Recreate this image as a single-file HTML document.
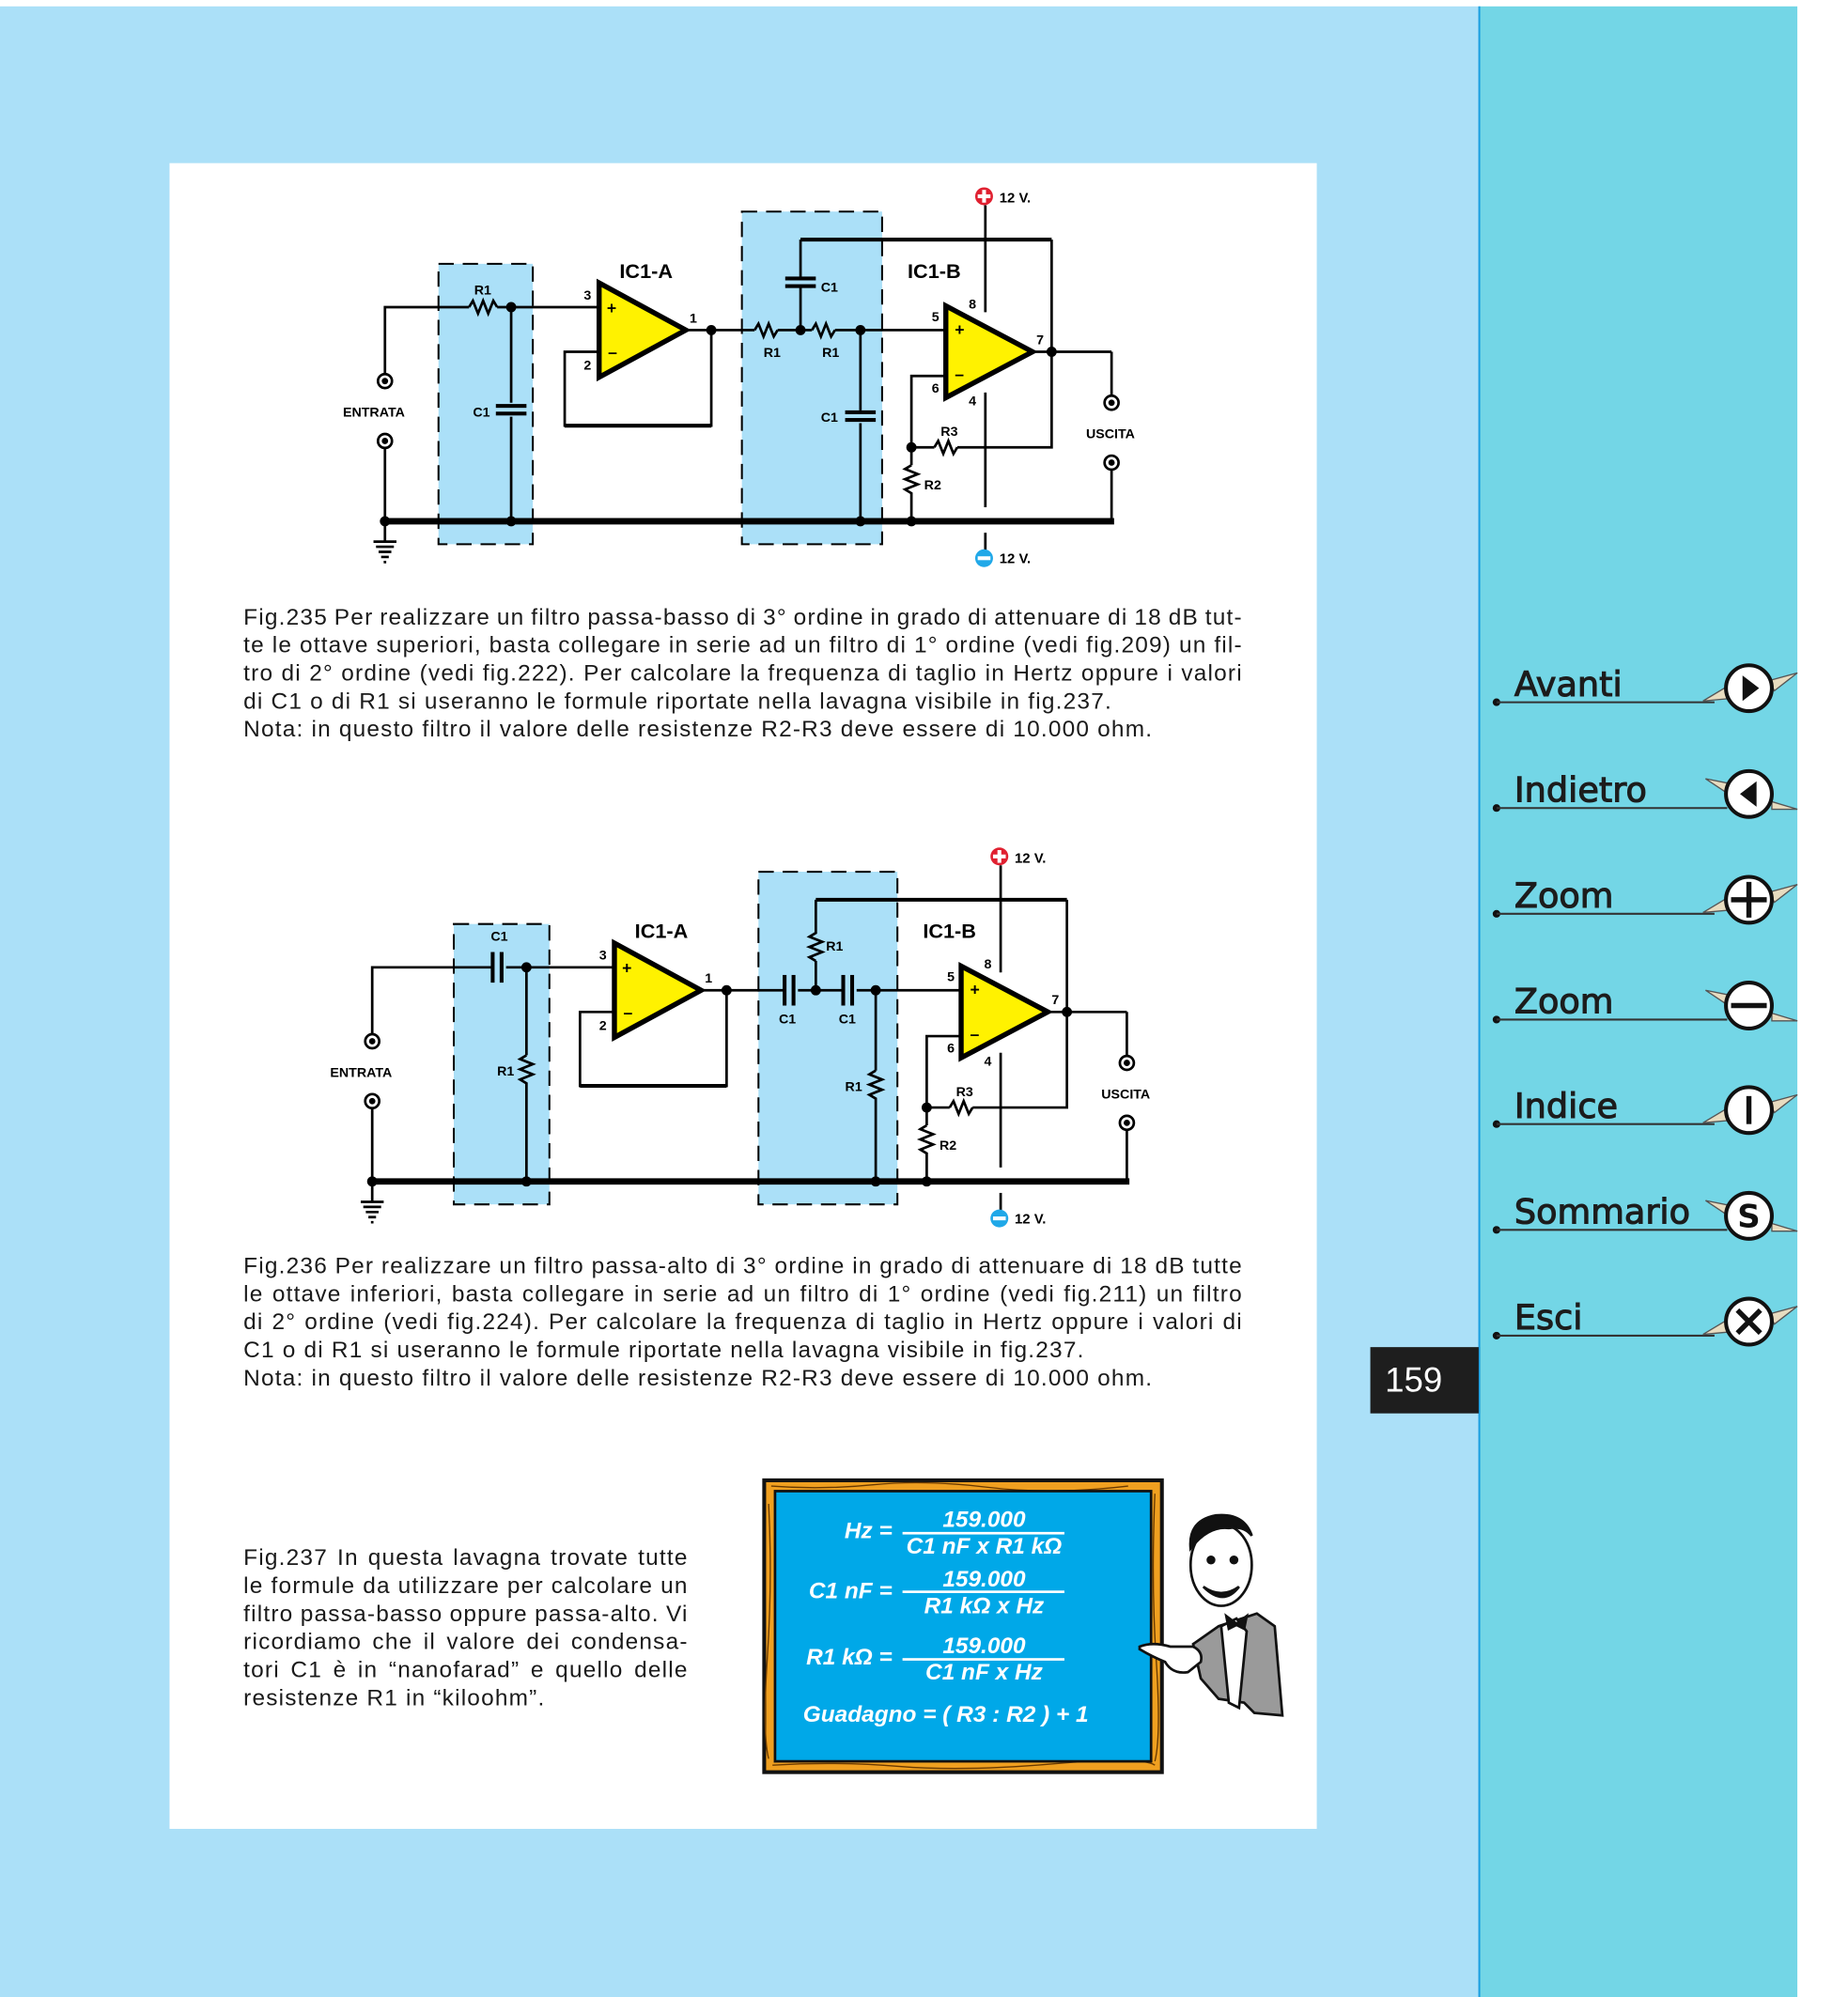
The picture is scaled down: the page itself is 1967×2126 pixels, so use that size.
<!DOCTYPE html>
<html><head><meta charset="utf-8"><style>
html,body{margin:0;padding:0;background:#fff;}
#wrap{position:absolute;left:0;top:0;width:1450px;height:1567px;transform:scale(1.3568);transform-origin:0 0;overflow:hidden;}
.t{position:absolute;font-family:"Liberation Sans",sans-serif;font-size:18px;letter-spacing:0.88px;color:#1a1a1a;line-height:22px;}
.t div{white-space:nowrap;}
.j{text-align:justify;text-align-last:justify;word-spacing:-4px;}
.nav{position:absolute;left:1188px;font-family:"DejaVu Sans",sans-serif;font-size:27px;color:#1c1c1c;-webkit-text-stroke:0.8px #1c1c1c;}
</style></head><body><div id="wrap">
<svg width="1450" height="1567" viewBox="0 0 1450 1567" style="position:absolute;left:0;top:0">
<rect x="0" y="5" width="1160" height="1562" fill="#abe0f8"/>
<rect x="1160" y="5" width="250" height="1562" fill="#73d6e6"/>
<line x1="1160.5" y1="5" x2="1160.5" y2="1567" stroke="#1a9ee0" stroke-width="1.5"/>
<rect x="133" y="128" width="900" height="1307" fill="#fff"/>
<rect x="1075" y="1057" width="85" height="52" fill="#1e1e1e"/>
<text x="1109" y="1092" fill="#fff" font-family="Liberation Sans" font-size="27" text-anchor="middle">159</text>

<defs>
<g id="jack"><circle r="5.5" fill="#fff" stroke="#000" stroke-width="2"/><circle r="2.5" fill="#000"/></g>
<g id="node"><circle r="4" fill="#000"/></g>
</defs>

<!-- CIRCUIT 1 -->
<g font-family="Liberation Sans" font-weight="bold" fill="#000">
<rect x="344" y="207" width="74" height="220" fill="#abe0f8" stroke="#000" stroke-width="1.5" stroke-dasharray="12,7"/>
<rect x="582" y="166" width="110" height="261" fill="#abe0f8" stroke="#000" stroke-width="1.5" stroke-dasharray="12,7"/>
<g stroke="#000" stroke-width="2" fill="none">
<polyline points="302,293 302,241 368,241"/>
<path d="M368,241 l3,-5 l4,10 l4,-10 l4,10 l4,-10 l3,5"/>
<line x1="390" y1="241" x2="470" y2="241"/>
<line x1="401" y1="241" x2="401" y2="316"/><line x1="401" y1="327" x2="401" y2="409"/>
<line x1="302" y1="351" x2="302" y2="409"/>
<polyline points="538,259 592,259"/>
<path d="M592,259 l3,-5 l4,10 l4,-10 l4,10 l3,-5"/>
<line x1="610" y1="259" x2="637" y2="259"/>
<path d="M637,259 l3,-5 l4,10 l4,-10 l4,10 l3,-5"/>
<line x1="655" y1="259" x2="742" y2="259"/>
<polyline points="558,259 558,334 443,334 443,276 470,276"/>
<line x1="628" y1="259" x2="628" y2="225"/><line x1="628" y1="218" x2="628" y2="188"/>
<line x1="675" y1="259" x2="675" y2="322"/><line x1="675" y1="332" x2="675" y2="409"/>
<polyline points="742,295 715,295 715,365"/>
<path d="M715,365 l-5,3 l10,4 l-10,4 l10,4 l-10,4 l5,3 v24"/>
<line x1="715" y1="351" x2="733" y2="351"/>
<path d="M733,351 l3,-5 l4,10 l4,-10 l4,10 l3,-5"/>
<polyline points="751,351 825,351 825,188"/>
<line x1="810" y1="276" x2="872" y2="276"/><line x1="872" y1="276" x2="872" y2="311"/>
<line x1="872" y1="369" x2="872" y2="409"/>
<line x1="773" y1="161" x2="773" y2="245"/><line x1="773" y1="308" x2="773" y2="398"/><line x1="773" y1="418" x2="773" y2="432"/>
</g>
<line x1="628" y1="188" x2="825" y2="188" stroke="#000" stroke-width="3"/>
<line x1="443" y1="334" x2="558" y2="334" stroke="#000" stroke-width="3"/>
<rect x="616" y="217" width="24" height="3"/><rect x="616" y="223" width="24" height="3"/>
<rect x="389" y="317" width="24" height="3"/><rect x="389" y="323" width="24" height="3"/>
<rect x="663" y="322" width="24" height="3"/><rect x="663" y="328" width="24" height="3"/>
<line x1="299" y1="409" x2="874" y2="409" stroke="#000" stroke-width="5"/>
<path d="M302,409 v15 M293,425 h18 M295,429 h14 M297,433 h10 M299,437 h6 M301,441 h2" stroke="#000" stroke-width="2"/>
<polygon points="470,222 470,296 538,259" fill="#fff200" stroke="#000" stroke-width="4" stroke-linejoin="miter"/>
<polygon points="742,240 742,312 810,276" fill="#fff200" stroke="#000" stroke-width="4"/>
<text x="476" y="246" font-size="13">+</text><text x="477" y="281" font-size="13">–</text>
<text x="749" y="263" font-size="13">+</text><text x="749" y="298" font-size="13">–</text>
<use href="#node" x="401" y="241"/><use href="#node" x="558" y="259"/><use href="#node" x="628" y="259"/><use href="#node" x="675" y="259"/>
<use href="#node" x="825" y="276"/><use href="#node" x="715" y="351"/>
<use href="#node" x="302" y="409"/><use href="#node" x="401" y="409"/><use href="#node" x="675" y="409"/><use href="#node" x="715" y="409"/>
<use href="#jack" x="302" y="299"/><use href="#jack" x="302" y="346"/><use href="#jack" x="872" y="316"/><use href="#jack" x="872" y="363"/>
<circle cx="772" cy="154" r="7" fill="#e02030"/><rect x="767" y="152.5" width="10" height="3" fill="#fff"/><rect x="770.5" y="149" width="3" height="10" fill="#fff"/>
<circle cx="772" cy="438" r="7" fill="#20a8e8"/><rect x="767" y="436.5" width="10" height="3" fill="#fff"/>
<text x="784" y="159" font-size="11">12 V.</text><text x="784" y="442" font-size="11">12 V.</text>
<text x="486" y="218" font-size="16">IC1-A</text><text x="712" y="218" font-size="16">IC1-B</text>
<g font-size="10.5">
<text x="372" y="231">R1</text><text x="458" y="235">3</text><text x="458" y="290">2</text><text x="541" y="253">1</text>
<text x="644" y="229">C1</text><text x="599" y="280">R1</text><text x="645" y="280">R1</text><text x="644" y="331">C1</text>
<text x="731" y="252">5</text><text x="760" y="242">8</text><text x="813" y="270">7</text><text x="731" y="308">6</text><text x="760" y="318">4</text>
<text x="738" y="342">R3</text><text x="725" y="384">R2</text><text x="371" y="327">C1</text>
<text x="269" y="327">ENTRATA</text><text x="852" y="344">USCITA</text>
</g>
</g>

<!-- CIRCUIT 2 -->
<g font-family="Liberation Sans" font-weight="bold" fill="#000" transform="translate(12,518)">
<rect x="344" y="207" width="75" height="220" fill="#abe0f8" stroke="#000" stroke-width="1.5" stroke-dasharray="12,7"/>
<rect x="583" y="166" width="109" height="261" fill="#abe0f8" stroke="#000" stroke-width="1.5" stroke-dasharray="12,7"/>
<g stroke="#000" stroke-width="2" fill="none">
<polyline points="280,293 280,241 375,241"/>
<line x1="385" y1="241" x2="470" y2="241"/>
<line x1="280" y1="351" x2="280" y2="409"/>
<polyline points="401,241 401,310"/>
<path d="M401,310 l-5,3 l10,4 l-10,4 l10,4 l-10,4 l5,3 v78"/>
<line x1="538" y1="259" x2="604" y2="259"/><line x1="614" y1="259" x2="650" y2="259"/><line x1="660" y1="259" x2="742" y2="259"/>
<polyline points="558,259 558,334 443,334 443,276 470,276"/>
<polyline points="628,259 628,236"/>
<path d="M628,236 l-5,-3 l10,-4 l-10,-4 l10,-4 l-10,-4 l5,-3 v-26"/>
<polyline points="675,259 675,322"/>
<path d="M675,322 l-5,3 l10,4 l-10,4 l10,4 l-10,4 l5,3 v65"/>
<polyline points="742,295 715,295 715,365"/>
<path d="M715,365 l-5,3 l10,4 l-10,4 l10,4 l-10,4 l5,3 v24"/>
<line x1="715" y1="351" x2="733" y2="351"/>
<path d="M733,351 l3,-5 l4,10 l4,-10 l4,10 l3,-5"/>
<polyline points="751,351 825,351 825,188"/>
<line x1="810" y1="276" x2="872" y2="276"/><line x1="872" y1="276" x2="872" y2="311"/>
<line x1="872" y1="369" x2="872" y2="409"/>
<line x1="773" y1="161" x2="773" y2="245"/><line x1="773" y1="308" x2="773" y2="398"/><line x1="773" y1="418" x2="773" y2="432"/>
</g>
<line x1="628" y1="188" x2="825" y2="188" stroke="#000" stroke-width="3"/>
<line x1="443" y1="334" x2="558" y2="334" stroke="#000" stroke-width="3"/>
<rect x="373" y="229" width="3" height="24"/><rect x="380" y="229" width="3" height="24"/>
<rect x="602" y="247" width="3" height="24"/><rect x="609" y="247" width="3" height="24"/>
<rect x="648" y="247" width="3" height="24"/><rect x="655" y="247" width="3" height="24"/>
<line x1="277" y1="409" x2="874" y2="409" stroke="#000" stroke-width="5"/>
<path d="M280,409 v15 M271,425 h18 M273,429 h14 M275,433 h10 M277,437 h6 M279,441 h2" stroke="#000" stroke-width="2"/>
<polygon points="470,222 470,296 538,259" fill="#fff200" stroke="#000" stroke-width="4"/>
<polygon points="742,240 742,312 810,276" fill="#fff200" stroke="#000" stroke-width="4"/>
<text x="476" y="246" font-size="13">+</text><text x="477" y="281" font-size="13">–</text>
<text x="749" y="263" font-size="13">+</text><text x="749" y="298" font-size="13">–</text>
<use href="#node" x="401" y="241"/><use href="#node" x="558" y="259"/><use href="#node" x="628" y="259"/><use href="#node" x="675" y="259"/>
<use href="#node" x="825" y="276"/><use href="#node" x="715" y="351"/>
<use href="#node" x="280" y="409"/><use href="#node" x="401" y="409"/><use href="#node" x="675" y="409"/><use href="#node" x="715" y="409"/>
<use href="#jack" x="280" y="299"/><use href="#jack" x="280" y="346"/><use href="#jack" x="872" y="316"/><use href="#jack" x="872" y="363"/>
<circle cx="772" cy="154" r="7" fill="#e02030"/><rect x="767" y="152.5" width="10" height="3" fill="#fff"/><rect x="770.5" y="149" width="3" height="10" fill="#fff"/>
<circle cx="772" cy="438" r="7" fill="#20a8e8"/><rect x="767" y="436.5" width="10" height="3" fill="#fff"/>
<text x="784" y="159" font-size="11">12 V.</text><text x="784" y="442" font-size="11">12 V.</text>
<text x="486" y="218" font-size="16">IC1-A</text><text x="712" y="218" font-size="16">IC1-B</text>
<g font-size="10.5">
<text x="373" y="220">C1</text><text x="458" y="235">3</text><text x="458" y="290">2</text><text x="541" y="253">1</text>
<text x="636" y="228">R1</text><text x="599" y="285">C1</text><text x="646" y="285">C1</text><text x="651" y="338">R1</text>
<text x="731" y="252">5</text><text x="760" y="242">8</text><text x="813" y="270">7</text><text x="731" y="308">6</text><text x="760" y="318">4</text>
<text x="738" y="342">R3</text><text x="725" y="384">R2</text><text x="378" y="326">R1</text>
<text x="247" y="327">ENTRATA</text><text x="852" y="344">USCITA</text>
</g>
</g>

<!-- BLACKBOARD -->
<rect x="598" y="1160" width="315" height="232" fill="#111"/>
<rect x="601" y="1163" width="309" height="226" fill="#f0a020"/>
<path d="M605,1166 q40,3 80,-1 t90,2 t110,-1 M606,1385 q50,-3 100,1 t120,-2 t80,1 M603,1180 q3,60 -1,120 t1,80 M906,1172 q-3,70 1,130 t-1,80" stroke="#6a3a00" stroke-width="1" fill="none"/>
<rect x="607" y="1169" width="297" height="214" fill="#111"/>
<rect x="609" y="1171" width="293" height="210" fill="#00a8e8"/>
<g font-family="Liberation Sans" font-weight="bold" font-style="italic" fill="#fff" font-size="18">
<text x="700" y="1207" text-anchor="end">Hz =</text>
<text x="772" y="1198" text-anchor="middle">159.000</text>
<rect x="708" y="1202" width="127" height="2"/>
<text x="772" y="1219" text-anchor="middle">C1 nF x R1 kΩ</text>
<text x="700" y="1254" text-anchor="end">C1 nF =</text>
<text x="772" y="1245" text-anchor="middle">159.000</text>
<rect x="708" y="1248" width="127" height="2"/>
<text x="772" y="1266" text-anchor="middle">R1 kΩ x Hz</text>
<text x="700" y="1306" text-anchor="end">R1 kΩ =</text>
<text x="772" y="1297" text-anchor="middle">159.000</text>
<rect x="708" y="1301" width="127" height="2"/>
<text x="772" y="1318" text-anchor="middle">C1 nF x Hz</text>
<text x="630" y="1351">Guadagno = ( R3 : R2 ) + 1</text>
</g>
<!-- cartoon man -->
<g stroke="#111" stroke-width="2">
<path d="M936,1290 l20,-14 l30,-10 l14,10 l6,70 l-22,-2 l-8,-8 l-20,-3 l-14,-16 z" fill="#9a9a9a"/>
<path d="M958,1276 l12,-6 l8,10 l-6,60 l-8,-4 z" fill="#fff"/>
<path d="M962,1268 l8,6 l8,-6 l-2,10 l-6,-3 l-6,3 z" fill="#111"/>
<ellipse cx="958" cy="1228" rx="24" ry="32" fill="#fff"/>
<path d="M934,1215 q-2,-22 20,-26 q22,-2 28,16 q-6,-8 -18,-6 q-16,-2 -30,16 z" fill="#111"/>
<path d="M944,1245 q14,10 28,0 q-12,16 -28,0 z" fill="#111"/>
<circle cx="950" cy="1224" r="2.5" fill="#111"/><circle cx="968" cy="1224" r="2.5" fill="#111"/>
<path d="M894,1292 q10,-4 24,0 l18,0 q8,4 6,12 l-10,8 q-12,2 -18,-8 q-10,-4 -20,-10 z" fill="#fff"/>
</g>

<!-- nav icons -->
<g transform="translate(0,540)">
<circle cx="1174" cy="11" r="3" fill="#111"/><line x1="1174" y1="11" x2="1345" y2="11" stroke="#333" stroke-width="1.5"/>
<path d="M1336,10 l20,-12 l2,10 z M1388,-6 l22,-6 l-18,14 z" fill="#e8dcc0" stroke="#555" stroke-width="1"/>
<circle cx="1372" cy="0" r="18" fill="#fff" stroke="#111" stroke-width="3"/>
<polygon points="1367,-10 1367,10 1380,0" fill="#111"/>
</g>
<g transform="translate(0,623)">
<circle cx="1174" cy="11" r="3" fill="#111"/><line x1="1174" y1="11" x2="1355" y2="11" stroke="#333" stroke-width="1.5"/>
<path d="M1338,-12 l20,4 l-2,8 z M1390,6 l20,6 l-20,0 z" fill="#e8dcc0" stroke="#555" stroke-width="1"/>
<circle cx="1372" cy="0" r="18" fill="#fff" stroke="#111" stroke-width="3"/>
<polygon points="1378,-10 1378,10 1365,0" fill="#111"/>
</g>
<g transform="translate(0,706)">
<circle cx="1174" cy="11" r="3" fill="#111"/><line x1="1174" y1="11" x2="1345" y2="11" stroke="#333" stroke-width="1.5"/>
<path d="M1336,10 l20,-12 l2,10 z M1388,-6 l22,-6 l-18,14 z" fill="#e8dcc0" stroke="#555" stroke-width="1"/>
<circle cx="1372" cy="0" r="18" fill="#fff" stroke="#111" stroke-width="3"/>
<path d="M1358,0 h28 M1372,-14 v28" stroke="#111" stroke-width="4"/>
</g>
<g transform="translate(0,789)">
<circle cx="1174" cy="11" r="3" fill="#111"/><line x1="1174" y1="11" x2="1355" y2="11" stroke="#333" stroke-width="1.5"/>
<path d="M1338,-12 l20,4 l-2,8 z M1390,6 l20,6 l-20,0 z" fill="#e8dcc0" stroke="#555" stroke-width="1"/>
<circle cx="1372" cy="0" r="18" fill="#fff" stroke="#111" stroke-width="3"/>
<path d="M1358,0 h28" stroke="#111" stroke-width="4"/>
</g>
<g transform="translate(0,871)">
<circle cx="1174" cy="11" r="3" fill="#111"/><line x1="1174" y1="11" x2="1345" y2="11" stroke="#333" stroke-width="1.5"/>
<path d="M1336,10 l20,-12 l2,10 z M1388,-6 l22,-6 l-18,14 z" fill="#e8dcc0" stroke="#555" stroke-width="1"/>
<circle cx="1372" cy="0" r="18" fill="#fff" stroke="#111" stroke-width="3"/>
<path d="M1372,-11 v22" stroke="#111" stroke-width="4"/>
</g>
<g transform="translate(0,954)">
<circle cx="1174" cy="11" r="3" fill="#111"/><line x1="1174" y1="11" x2="1355" y2="11" stroke="#333" stroke-width="1.5"/>
<path d="M1338,-12 l20,4 l-2,8 z M1390,6 l20,6 l-20,0 z" fill="#e8dcc0" stroke="#555" stroke-width="1"/>
<circle cx="1372" cy="0" r="18" fill="#fff" stroke="#111" stroke-width="3"/>
<text x="1372" y="9" font-family="DejaVu Sans" font-weight="bold" font-size="25" text-anchor="middle" fill="#111">S</text>
</g>
<g transform="translate(0,1037)">
<circle cx="1174" cy="11" r="3" fill="#111"/><line x1="1174" y1="11" x2="1345" y2="11" stroke="#333" stroke-width="1.5"/>
<path d="M1336,10 l20,-12 l2,10 z M1388,-6 l22,-6 l-18,14 z" fill="#e8dcc0" stroke="#555" stroke-width="1"/>
<circle cx="1372" cy="0" r="18" fill="#fff" stroke="#111" stroke-width="3"/>
<path d="M1363,-9 l18,18 M1381,-9 l-18,18" stroke="#111" stroke-width="4"/>
</g>
</svg>
<div class="nav" style="top:522px">Avanti</div>
<div class="nav" style="top:605px">Indietro</div>
<div class="nav" style="top:688px">Zoom</div>
<div class="nav" style="top:771px">Zoom</div>
<div class="nav" style="top:853px">Indice</div>
<div class="nav" style="top:936px">Sommario</div>
<div class="nav" style="top:1019px">Esci</div>

<div class="t" style="left:191px;top:473px;width:784px">
<div class="j">Fig.235 Per realizzare un filtro passa-basso di 3° ordine in grado di attenuare di 18 dB tut-</div>
<div class="j">te le ottave superiori, basta collegare in serie ad un filtro di 1° ordine (vedi fig.209) un fil-</div>
<div class="j">tro di 2° ordine (vedi fig.222). Per calcolare la frequenza di taglio in Hertz oppure i valori</div>
<div>di C1 o di R1 si useranno le formule riportate nella lavagna visibile in fig.237.</div>
<div>Nota: in questo filtro il valore delle resistenze R2-R3 deve essere di 10.000 ohm.</div>
</div>
<div class="t" style="left:191px;top:982px;width:784px">
<div class="j">Fig.236 Per realizzare un filtro passa-alto di 3° ordine in grado di attenuare di 18 dB tutte</div>
<div class="j">le ottave inferiori, basta collegare in serie ad un filtro di 1° ordine (vedi fig.211) un filtro</div>
<div class="j">di 2° ordine (vedi fig.224). Per calcolare la frequenza di taglio in Hertz oppure i valori di</div>
<div>C1 o di R1 si useranno le formule riportate nella lavagna visibile in fig.237.</div>
<div>Nota: in questo filtro il valore delle resistenze R2-R3 deve essere di 10.000 ohm.</div>
</div>
<div class="t" style="left:191px;top:1211px;width:349px">
<div class="j">Fig.237 In questa lavagna trovate tutte</div>
<div class="j">le formule da utilizzare per calcolare un</div>
<div class="j">filtro passa-basso oppure passa-alto. Vi</div>
<div class="j">ricordiamo che il valore dei condensa-</div>
<div class="j">tori C1 è in “nanofarad” e quello delle</div>
<div>resistenze R1 in “kiloohm”.</div>
</div>
</div></body></html>
